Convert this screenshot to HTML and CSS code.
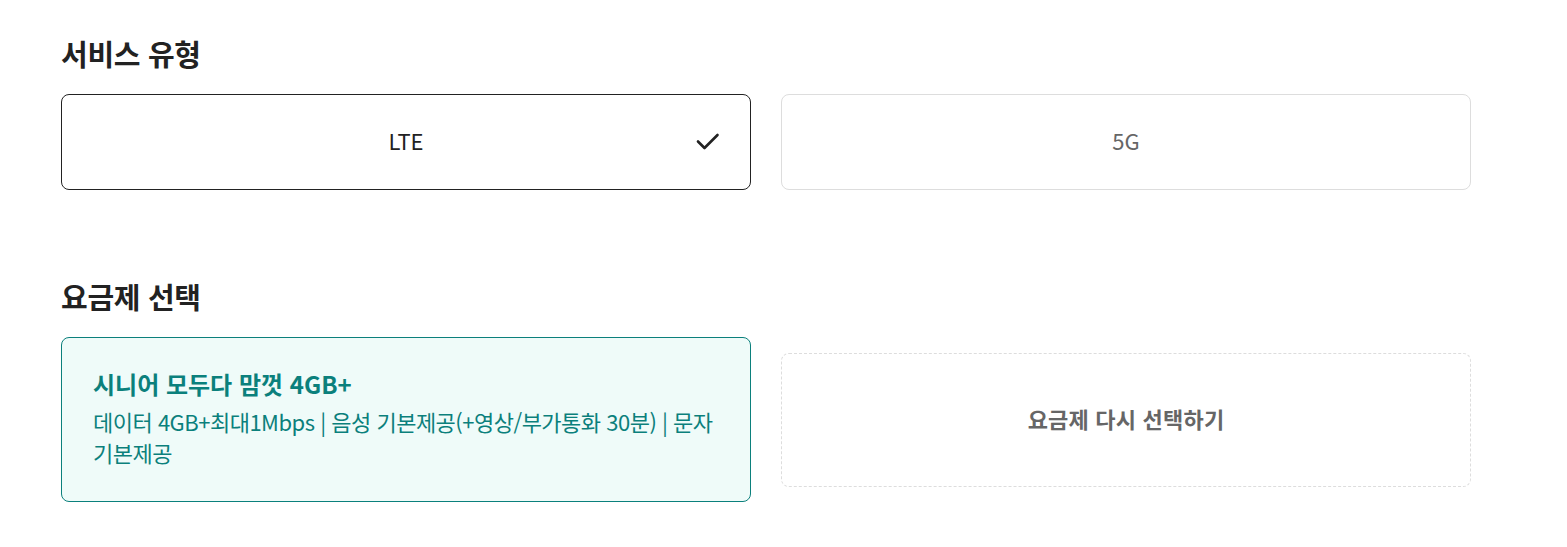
FILE: index.html
```html
<!DOCTYPE html>
<html lang="ko">
<head>
<meta charset="utf-8">
<link rel="stylesheet" href="styles.css">
</head>
<body>
<main class="page">
  <section class="section">
    <h2 class="section-title">서비스 유형</h2>
    <div class="row">
      <button class="type-card is-selected">
        <span class="type-label">LTE</span>
        <svg class="check" width="24" height="18" viewBox="0 0 24 18" aria-hidden="true">
          <path d="M2 8.5 L8.5 15 L21.5 2" fill="none" stroke="#222" stroke-width="2.6" stroke-linecap="round" stroke-linejoin="round"/>
        </svg>
      </button>
      <button class="type-card">
        <span class="type-label">5G</span>
      </button>
    </div>
  </section>
  <section class="section section-plan">
    <h2 class="section-title">요금제 선택</h2>
    <div class="row row-center">
      <div class="plan-card">
        <div class="plan-name">시니어 모두다 맘껏 4GB+</div>
        <div class="plan-desc">데이터 4GB+최대1Mbps | 음성 기본제공(+영상/부가통화 30분) | 문자 기본제공</div>
      </div>
      <button class="reselect-card">요금제 다시 선택하기</button>
    </div>
  </section>
</main>
</body>
</html>
```
FILE: styles.css
```css
* { box-sizing: border-box; }
html, body { margin: 0; background: #fff; }
body {
  font-family: "Noto Sans CJK KR", "Noto Sans", sans-serif;
  color: #222;
}
.page {
  padding: 33px 0 0 61px;
  width: 1471px;
}
.section-title {
  margin: 0 0 21px;
  font-size: 29px;
  line-height: 40px;
  font-weight: 700;
  color: #222;
  letter-spacing: -0.3px;
}
.section-plan { margin-top: 86px; }
.row {
  display: grid;
  grid-template-columns: 690px 690px;
  column-gap: 30px;
}
.row-center { align-items: center; }
button {
  font-family: inherit;
  background: #fff;
  margin: 0;
  cursor: pointer;
}
.type-card {
  position: relative;
  height: 96px;
  border: 1px solid #ddd;
  border-radius: 8px;
  display: flex;
  align-items: center;
  justify-content: center;
  padding: 0 0 4px;
}
.type-card.is-selected { border-color: #222; }
.type-label {
  font-size: 22px;
  color: #666;
  line-height: 30px;
}
.is-selected .type-label { color: #222; }
.check {
  position: absolute;
  right: 30px;
  top: 50%;
  margin-top: -9px;
  display: block;
}
.plan-card {
  border: 1px solid #0b807c;
  border-radius: 8px;
  background: #effbf9;
  padding: 30px 32px 33px 31px;
  color: #0b807c;
}
.plan-name {
  font-size: 24px;
  line-height: 32px;
  font-weight: 700;
}
.plan-desc {
  margin-top: 6px;
  font-size: 22px;
  line-height: 31px;
  letter-spacing: -0.5px;
  word-break: keep-all;
}
.reselect-card {
  height: 134px;
  border: 1px dashed #ddd;
  border-radius: 8px;
  padding: 0 0 4px;
  font-size: 22px;
  font-weight: 700;
  color: #666;
  letter-spacing: 0.2px;
}
```
